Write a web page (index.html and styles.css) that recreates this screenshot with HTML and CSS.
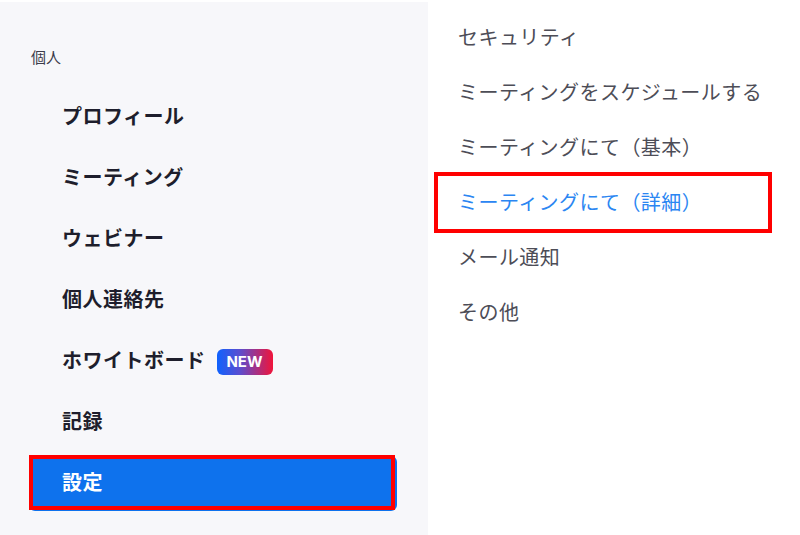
FILE: index.html
```html
<!DOCTYPE html>
<html lang="ja">
<head>
    <meta charset="UTF-8">
    <meta name="viewport" content="width=device-width, initial-scale=1.0">
    <title>設定</title>
    <link rel="stylesheet" href="styles.css">
</head>
<body>

<div class="page">
    <nav class="sidebar">
        <div class="group-title">個人</div>
        <ul class="menu">
            <li class="menu-item">プロフィール</li>
            <li class="menu-item">ミーティング</li>
            <li class="menu-item">ウェビナー</li>
            <li class="menu-item">個人連絡先</li>
            <li class="menu-item">ホワイトボード <span class="badge-new">NEW</span></li>
            <li class="menu-item">記録</li>
            <li class="menu-item active marked">設定</li>
        </ul>
    </nav>

    <div class="tabs">
        <ul class="tab-list">
            <li class="tab">セキュリティ</li>
            <li class="tab">ミーティングをスケジュールする</li>
            <li class="tab">ミーティングにて（基本）</li>
            <li class="tab current marked">ミーティングにて（詳細）</li>
            <li class="tab">メール通知</li>
            <li class="tab">その他</li>
        </ul>
    </div>
</div>

</body>
</html>
```

FILE: styles.css
```css
body {
    margin: 0;
    background: #fff;
    font-family: "Noto Sans CJK JP", "Noto Sans", sans-serif;
}
ul {
    list-style: none;
    margin: 0;
    padding: 0;
}
.page {
    display: flex;
    height: 535px;
    overflow: hidden;
}
.sidebar {
    width: 428px;
    flex-shrink: 0;
    margin-top: 2px;
    padding-top: 45px;
    background: #f7f7fa;
}
.group-title {
    padding-left: 31px;
    font-size: 15px;
    line-height: 20px;
    color: #3b3b4a;
    margin-bottom: 23px;
}
.menu {
    display: flex;
    flex-direction: column;
    gap: 6px;
}
.menu-item {
    position: relative;
    display: flex;
    align-items: center;
    gap: 11px;
    margin-left: 29px;
    width: 335px;
    height: 51px;
    padding: 0 0 4px 33px;
    font-size: 20px;
    font-weight: 700;
    letter-spacing: 0.5px;
    color: #1e1e2c;
}
.menu-item.active {
    background: #0e72ed;
    color: #fff;
    border-radius: 6px;
}
.menu-item.marked::after {
    content: "";
    position: absolute;
    left: 0;
    top: -1px;
    width: 358px;
    height: 47px;
    border: 4px solid #ff0000;
}
.badge-new {
    display: inline-block;
    width: 56px;
    height: 26px;
    line-height: 26px;
    border-radius: 6px;
    text-align: center;
    font-family: "Inter", "Noto Sans", sans-serif;
    font-size: 15px;
    font-weight: 700;
    letter-spacing: 0;
    color: #fff;
    background: linear-gradient(90deg, #0f62fe, #5a4ed0 40%, #f0143a);
    margin-top: 4px;
}
.tabs {
    flex: 1;
    padding-top: 9px;
}
.tab {
    position: relative;
    height: 55px;
    line-height: 55px;
    padding-left: 30px;
    font-size: 20px;
    letter-spacing: 0.45px;
    color: #4d4d57;
}
.tab.current {
    color: #2b86f2;
}
.tab.marked::after {
    content: "";
    position: absolute;
    left: 6px;
    top: -2px;
    width: 330px;
    height: 53px;
    border: 4px solid #ff0000;
}
```
